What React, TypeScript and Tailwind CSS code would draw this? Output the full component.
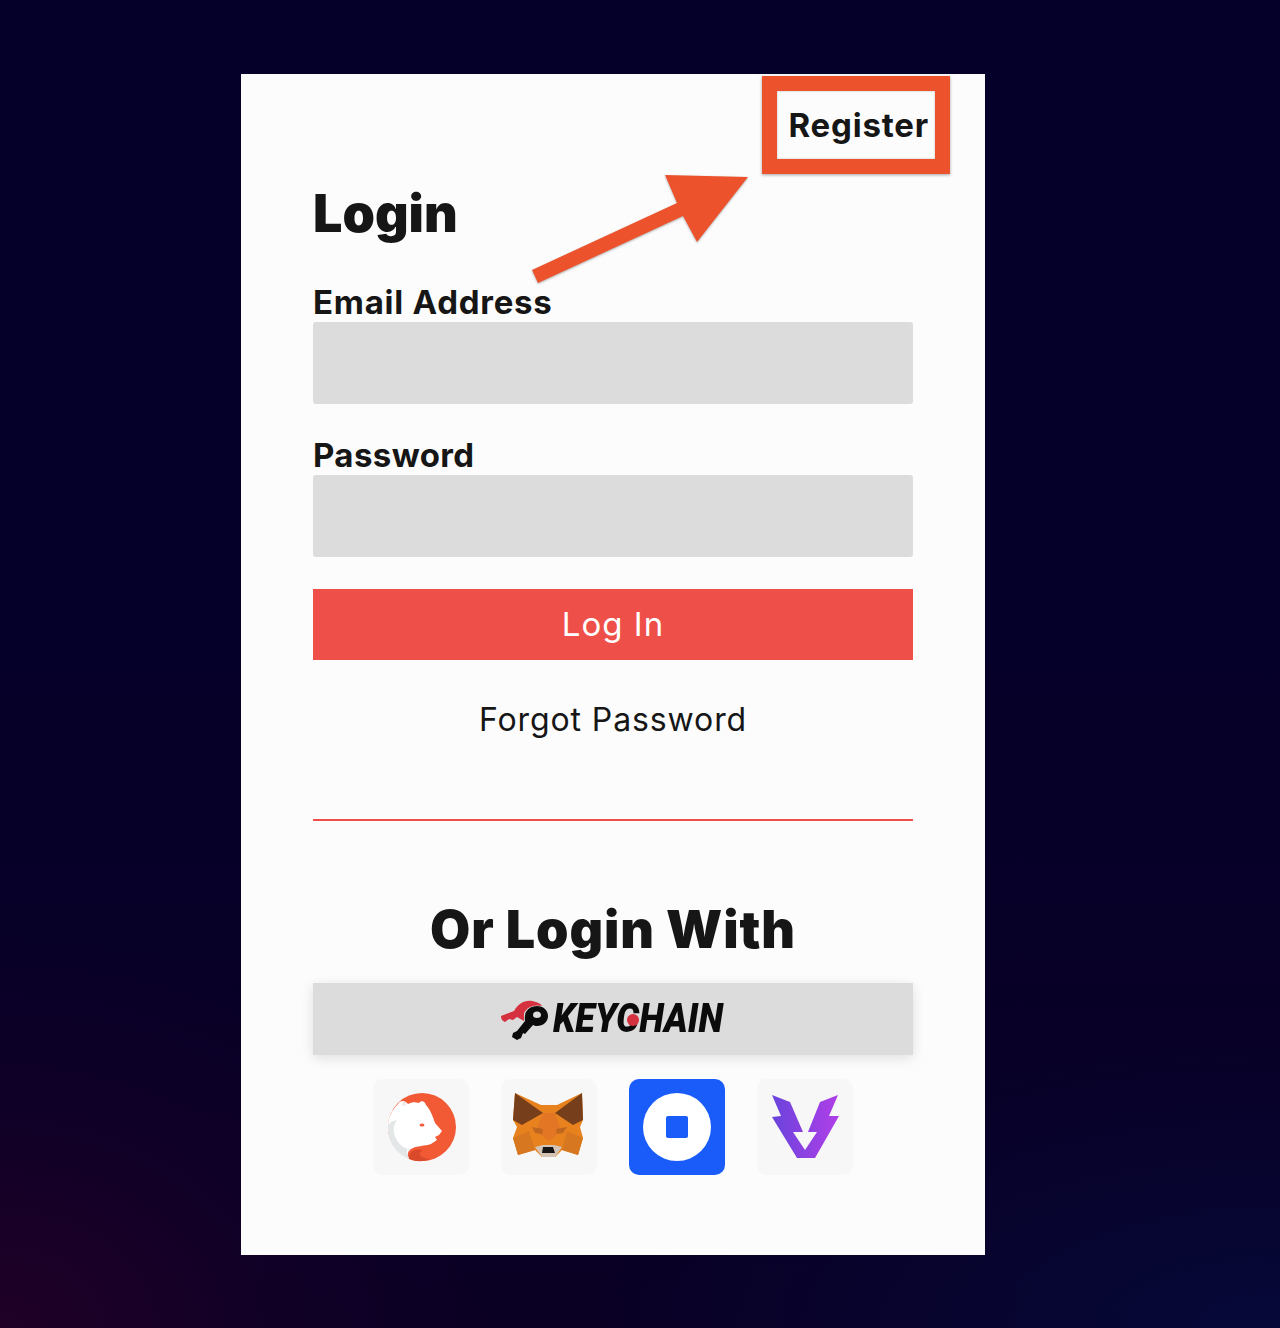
import React from "react";

const font = { fontFamily: "Inter, 'Noto Sans', sans-serif" };

const BearIcon = () => (
  <svg viewBox="0 0 96 96" className="w-24 h-24">
    <circle cx="49" cy="48" r="34" fill="#f15a35" />
    <path d="M25 25C27 21 32 21 35 25C39 23 42 23 46 24C48 21 52 22 53 26C57 30 60 38 62 44L69 52L66 56L62 58L64 61L58 65C52 67 44 67 40 69C36 71 34 73 35 79C24 74 15 62 15 48C15 38 19 31 25 25Z" fill="#ffffff" />
    <path d="M15 48C15 63 24 76 37 80C34 76 33 72 35 70C28 68 23 62 21 54C20 50 21 45 24 41C19 42 15 44 15 48Z" fill="#e3e7e8" />
    <path d="M36 80C35 73 42 69 50 71C44 74 46 79 57 80C50 83 43 83 36 80Z" fill="#d9492a" />
    <ellipse cx="49" cy="46" rx="2.500" ry="1.500" fill="#f15a35" />
    <circle cx="31" cy="25" r="2" fill="#f0e8e4" />
  </svg>
);

const FoxIcon = () => (
  <svg viewBox="0 0 96 96" className="w-24 h-24">
    <path d="M14 14L40 26H56L81 14L82 41L79 48L82 59L77 76L61 71L54 78H41L34 71L17 76L12 59L16 48L12 41Z" fill="#e8821e" />
    <path d="M14 14L42 34L21 46L12 41Z" fill="#763e1a" />
    <path d="M81 14L54 34L72 46L82 41Z" fill="#763e1a" />
    <path d="M42 34H54L60 52L48 62L35 52Z" fill="#e27625" />
    <path d="M31 48L42 50L41 55L34 54Z" fill="#c0671f" />
    <path d="M66 48L55 50L56 55L62 54Z" fill="#c0671f" />
    <path d="M12 59L28 52L34 71L17 76Z" fill="#d7771f" />
    <path d="M82 59L66 52L61 71L77 76Z" fill="#d7771f" />
    <path d="M34 68L41 78H54L61 68L53 66H42Z" fill="#d3c4b6" />
    <path d="M42 68H52L54 74H41Z" fill="#161616" />
  </svg>
);

const CoinbaseIcon = () => (
  <svg viewBox="0 0 96 96" className="w-24 h-24">
    <circle cx="48" cy="48" r="34" fill="#ffffff" />
    <rect x="37" y="37" width="22" height="22" rx="2" fill="#1a5cfa" />
  </svg>
);

const VoltIcon = () => (
  <svg viewBox="0 0 96 96" className="w-24 h-24">
    <defs>
      <linearGradient id="volt" x1="0" y1="0" x2="1" y2="0">
        <stop offset="0" stopColor="#6a43dc" />
        <stop offset="1" stopColor="#b03fe8" />
      </linearGradient>
    </defs>
    <path d="M15 16L33 23L46 53H51L63 23L81 16L72 37L82 37L58 79H40L15 38L24 37Z" fill="url(#volt)" />
    <path d="M36 53H60L48 71Z" fill="#f7f7f7" />
  </svg>
);

const KeychainLogo = () => (
  <div className="flex items-center h-full">
    <svg viewBox="0 0 50 44" className="w-[50px] h-[44px] -ml-[2px]">
      <path d="M1 19L14 14C18 7 24 3 32 4C38 5 41 7 42 9C34 7 27 10 24 16L24 24L17 20L13 23L9 22L5 25C2 24 1 22 1 19Z" fill="#d5313f" />
      <path d="M37 9C43 9 48 13 48 19C48 25 43 29 37 29C35 29 34 28.500 33 28L25 37L23 36L21 41L17 43L12 40L13 36L17 34L25 24C25 22.500 24.500 21 25 19C25 13 31 9 37 9ZM37 14.500C34.500 14.500 33 16 33 18C33 20 34.500 21 37 21C39.500 21 41 20 41 18C41 16 39.500 14.500 37 14.500Z" fill="#0b0b0b" />
    </svg>
    <div className="relative ml-[3px] w-[172px] h-[40px]">
      <span
        className="block origin-left scale-x-[0.9] whitespace-nowrap text-[40px] leading-[40px] font-black italic text-[#0b0b0b]"
        style={{ fontFamily: "Roboto, sans-serif" }}
      >
        KEYCHAIN
      </span>
      <span className="absolute left-[74px] top-[15px] w-[12px] h-[12px] rounded-full bg-[#d5313f]" />
    </div>
  </div>
);

export default function App() {
  return (
    <div
      className="h-[1328px] pt-[74px] bg-[#05002a] overflow-hidden"
      style={{
        ...font,
        backgroundImage:
          "radial-gradient(ellipse 520px 400px at 0% 100%, #200026 0%, rgba(20,0,40,0.6) 55%, rgba(5,0,42,0) 100%), radial-gradient(ellipse 700px 300px at 100% 100%, #050838 0%, rgba(5,0,42,0) 100%), linear-gradient(#05002a 0%, #05002a 45%, #0a0024 100%)",
      }}
    >
      <div className="relative ml-[241px] w-[744px] h-[1181px] bg-[#fcfcfc] px-[72px] pt-[107px] text-[#161616]">
        {/* annotation drawn over the screenshot */}
        <div className="absolute left-[521px] top-[2px] w-[188px] h-[98px] border-[15px] border-[#ec532d] shadow-[0_1px_3px_rgba(0,0,0,0.35),inset_0_0_2px_rgba(0,0,0,0.3)] flex items-center justify-end pr-[6px]">
          <span className="text-[33px] leading-none font-bold tracking-[0.8px]">Register</span>
        </div>
        <svg className="absolute left-[285px] top-[96px]" width="230" height="120" viewBox="0 0 230 120">
          <path
            d="M139 5L222 7L171 72L157 46L12 113L6 100L151 33Z"
            fill="#ec532d"
            style={{ filter: "drop-shadow(0 1px 1px rgba(0,0,0,0.3))" }}
          />
        </svg>

        <h1 className="h-[66px] text-[52px] leading-[66px] font-black">Login</h1>

        <label className="block mt-[35px] h-[40px] text-[33px] leading-[40px] font-bold tracking-[0.75px]">
          Email Address
        </label>
        <div className="h-[82px] rounded-[3px] bg-[#dcdcdc]" />

        <label className="block mt-[31px] h-[40px] text-[33px] leading-[40px] font-bold tracking-[0.4px]">
          Password
        </label>
        <div className="h-[82px] rounded-[3px] bg-[#dcdcdc]" />

        <div className="mt-[32px] h-[71px] bg-[#ee5049] text-white text-[33px] tracking-[1px] flex items-center justify-center">
          Log In
        </div>

        <div className="mt-[40px] h-[40px] text-[32px] leading-[40px] tracking-[0.9px] text-center">
          Forgot Password
        </div>

        <div className="mt-[79px] h-[2px] bg-[#ee5049]" />

        <h2 className="mt-[77px] h-[64px] text-[52px] leading-[64px] font-black text-center tracking-[0.85px]">
          Or Login With
        </h2>

        <div className="mt-[21px] h-[72px] bg-[#dcdcdc] shadow-[0_3px_12px_rgba(0,0,0,0.12)] flex justify-center">
          <KeychainLogo />
        </div>

        <div className="mt-[24px] flex justify-center gap-8">
          <div className="w-24 h-24 rounded-[10px] bg-[#f7f7f7]"><BearIcon /></div>
          <div className="w-24 h-24 rounded-[10px] bg-[#f7f7f7]"><FoxIcon /></div>
          <div className="w-24 h-24 rounded-[10px] bg-[#1a5cfa]"><CoinbaseIcon /></div>
          <div className="w-24 h-24 rounded-[10px] bg-[#f7f7f7]"><VoltIcon /></div>
        </div>
      </div>
    </div>
  );
}
